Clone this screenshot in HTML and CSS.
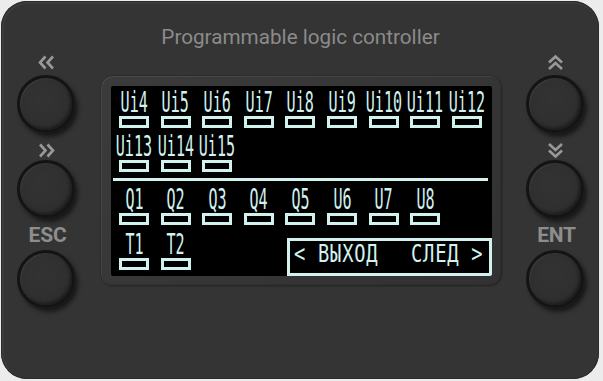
FILE: index.html
```html
<!DOCTYPE html>
<html>
<head>
<meta charset="utf-8">
<link rel="stylesheet" href="styles.css">
</head>
<body>
<div class="device">
  <div class="title">Programmable logic controller</div>
  <div class="main">
    <div class="keys">
      <div class="key-label kl1"><svg width="17" height="15" viewBox="0 0 17 15"><polyline points="7.5,1.5 2,7.5 7.5,13.5"/><polyline points="15,1.5 9.5,7.5 15,13.5"/></svg></div>
      <div class="btn b1"></div>
      <div class="key-label kl2"><svg width="17" height="15" viewBox="0 0 17 15"><polyline points="2,1.5 7.5,7.5 2,13.5"/><polyline points="9.5,1.5 15,7.5 9.5,13.5"/></svg></div>
      <div class="btn b2"></div>
      <div class="key-label kl3 txt">ESC</div>
      <div class="btn b3"></div>
    </div>
    <div class="bezel">
      <div class="screen">
        <div class="grid">
          <div class="cell"><div class="lbl"><span>Ui4</span></div><div class="box"></div></div>
          <div class="cell"><div class="lbl"><span>Ui5</span></div><div class="box"></div></div>
          <div class="cell"><div class="lbl"><span>Ui6</span></div><div class="box"></div></div>
          <div class="cell"><div class="lbl"><span>Ui7</span></div><div class="box"></div></div>
          <div class="cell"><div class="lbl"><span>Ui8</span></div><div class="box"></div></div>
          <div class="cell"><div class="lbl"><span>Ui9</span></div><div class="box"></div></div>
          <div class="cell"><div class="lbl"><span>Ui10</span></div><div class="box"></div></div>
          <div class="cell"><div class="lbl"><span>Ui11</span></div><div class="box"></div></div>
          <div class="cell"><div class="lbl"><span>Ui12</span></div><div class="box"></div></div>
          <div class="cell"><div class="lbl"><span>Ui13</span></div><div class="box"></div></div>
          <div class="cell"><div class="lbl"><span>Ui14</span></div><div class="box"></div></div>
          <div class="cell"><div class="lbl"><span>Ui15</span></div><div class="box"></div></div>
        </div>
        <div class="sep"></div>
        <div class="grid grid2">
          <div class="cell"><div class="lbl"><span>Q1</span></div><div class="box"></div></div>
          <div class="cell"><div class="lbl"><span>Q2</span></div><div class="box"></div></div>
          <div class="cell"><div class="lbl"><span>Q3</span></div><div class="box"></div></div>
          <div class="cell"><div class="lbl"><span>Q4</span></div><div class="box"></div></div>
          <div class="cell"><div class="lbl"><span>Q5</span></div><div class="box"></div></div>
          <div class="cell"><div class="lbl"><span>U6</span></div><div class="box"></div></div>
          <div class="cell"><div class="lbl"><span>U7</span></div><div class="box"></div></div>
          <div class="cell"><div class="lbl"><span>U8</span></div><div class="box"></div></div>
          <div class="cell"></div>
          <div class="cell"><div class="lbl"><span>T1</span></div><div class="box"></div></div>
          <div class="cell"><div class="lbl"><span>T2</span></div><div class="box"></div></div>
          <div class="nav">
            <div class="nav-l"><span>&lt; ВЫХОД</span></div>
            <div class="nav-r"><span>СЛЕД &gt;</span></div>
          </div>
        </div>
      </div>
    </div>
    <div class="keys">
      <div class="key-label kl1"><svg width="17" height="15" viewBox="0 0 17 15"><polyline points="2,7.5 8.5,1.5 15,7.5"/><polyline points="2,14 8.5,8 15,14"/></svg></div>
      <div class="btn b1"></div>
      <div class="key-label kl2"><svg width="17" height="15" viewBox="0 0 17 15"><polyline points="2,1 8.5,7 15,1"/><polyline points="2,7.5 8.5,13.5 15,7.5"/></svg></div>
      <div class="btn b2"></div>
      <div class="key-label kl3 txt">ENT</div>
      <div class="btn b3"></div>
    </div>
  </div>
</div>
</body>
</html>
```

FILE: styles.css
```css
html, body {
  margin: 0;
  padding: 0;
  background: #ececec;
}
.device {
  margin: 1px;
  width: 598px;
  height: 378px;
  box-sizing: border-box;
  background: #343434;
  border-radius: 26px;
  box-shadow: inset 0 0 0 1px #2b2b2b, inset 1px 1px 0 2px rgba(255,255,255,0.04);
  padding-top: 24px;
  overflow: hidden;
}
.title {
  font-family: Roboto, "Liberation Sans", sans-serif;
  font-size: 20.7px;
  line-height: 24px;
  height: 24px;
  color: #8b8b8b;
  text-align: center;
  padding-left: 1px;
}
.main {
  margin-top: 5px;
  display: flex;
  padding-left: 13px;
}
.keys {
  width: 64px;
  display: flex;
  flex-direction: column;
  align-items: center;
}
.key-label {
  height: 16px;
  display: flex;
  justify-content: center;
  align-items: center;
}
.key-label svg polyline {
  fill: none;
  stroke: #999999;
  stroke-width: 2.6;
  stroke-linecap: butt;
  stroke-linejoin: miter;
}
.txt {
  font-family: Roboto, "Liberation Sans", sans-serif;
  font-weight: bold;
  font-size: 21px;
  line-height: 16px;
  color: #8d8d8d;
  letter-spacing: -0.2px;
  padding-left: 3px;
}
.kl2 { margin-top: 9px; }
.kl3 { margin-top: 9px; }
.btn {
  width: 58px;
  height: 58px;
  box-sizing: border-box;
  border-radius: 50%;
  border: 3px solid #141414;
  background: radial-gradient(circle at 45% 40%, #333333 0%, #2f2f2f 60%, #262626 100%);
  box-shadow: 3px 4px 4px rgba(0,0,0,0.55), inset 1px 1px 1px rgba(255,255,255,0.06), inset -2px -2px 3px rgba(0,0,0,0.35);
}
.b1 { margin-top: 5px; }
.b2 { margin-top: 2px; }
.b3 { margin-top: 7px; }
.bezel {
  margin-top: 21px;
  margin-left: 22px;
  margin-right: 20px;
  width: 403px;
  height: 212px;
  box-sizing: border-box;
  padding: 10px;
  border-radius: 13px;
  border: 1px solid #2c2c2c;
  background: linear-gradient(135deg, #3b3b3b, #353535 60%, #323232);
  box-shadow: inset 1px 1px 0 rgba(255,255,255,0.08), inset -1px -1px 2px rgba(0,0,0,0.3);
}
.screen {
  width: 381px;
  height: 190px;
  background: #000;
  border-radius: 2px;
  overflow: hidden;
  box-sizing: border-box;
  padding: 4px 0 0 8px;
  color: #d2f2f0;
}
.grid {
  display: grid;
  grid-template-columns: repeat(9, 30px);
  column-gap: 11.6px;
  row-gap: 6px;
}
.grid2 {
  margin-top: 6px;
  row-gap: 7px;
}
.cell {
  width: 30px;
  height: 38px;
  display: flex;
  flex-direction: column;
}
.lbl {
  height: 26px;
  display: flex;
  justify-content: center;
  font-family: "DejaVu Sans Mono", monospace;
  font-size: 29px;
  line-height: 24px;
  white-space: nowrap;
}
.lbl span {
  display: inline-block;
  transform: scaleX(0.52);
  flex: none;
}
.box {
  width: 30px;
  height: 12px;
  box-sizing: border-box;
  border: 3px solid #d2f2f0;
}
.sep {
  margin: 6px 0 0 -6px;
  width: 375px;
  height: 3px;
  background: #d2f2f0;
}
.nav {
  grid-column: 5 / 10;
  margin: 6px -10px 0 2px;
  height: 38px;
  box-sizing: border-box;
  border: 3px solid #d2f2f0;
  display: flex;
  justify-content: space-between;
  padding: 0 5px 0 4px;
  font-family: "DejaVu Sans Mono", monospace;
  font-size: 25px;
  line-height: 25px;
  letter-spacing: 1px;
  white-space: nowrap;
}
.nav-l, .nav-r {
  width: 0;
  display: flex;
}
.nav-l { justify-content: flex-start; }
.nav-r { justify-content: flex-end; }
.nav-l span, .nav-r span {
  display: inline-block;
  flex: none;
  transform: scaleX(0.75);
}
.nav-l span { transform-origin: left center; }
.nav-r span { transform-origin: right center; }
```
